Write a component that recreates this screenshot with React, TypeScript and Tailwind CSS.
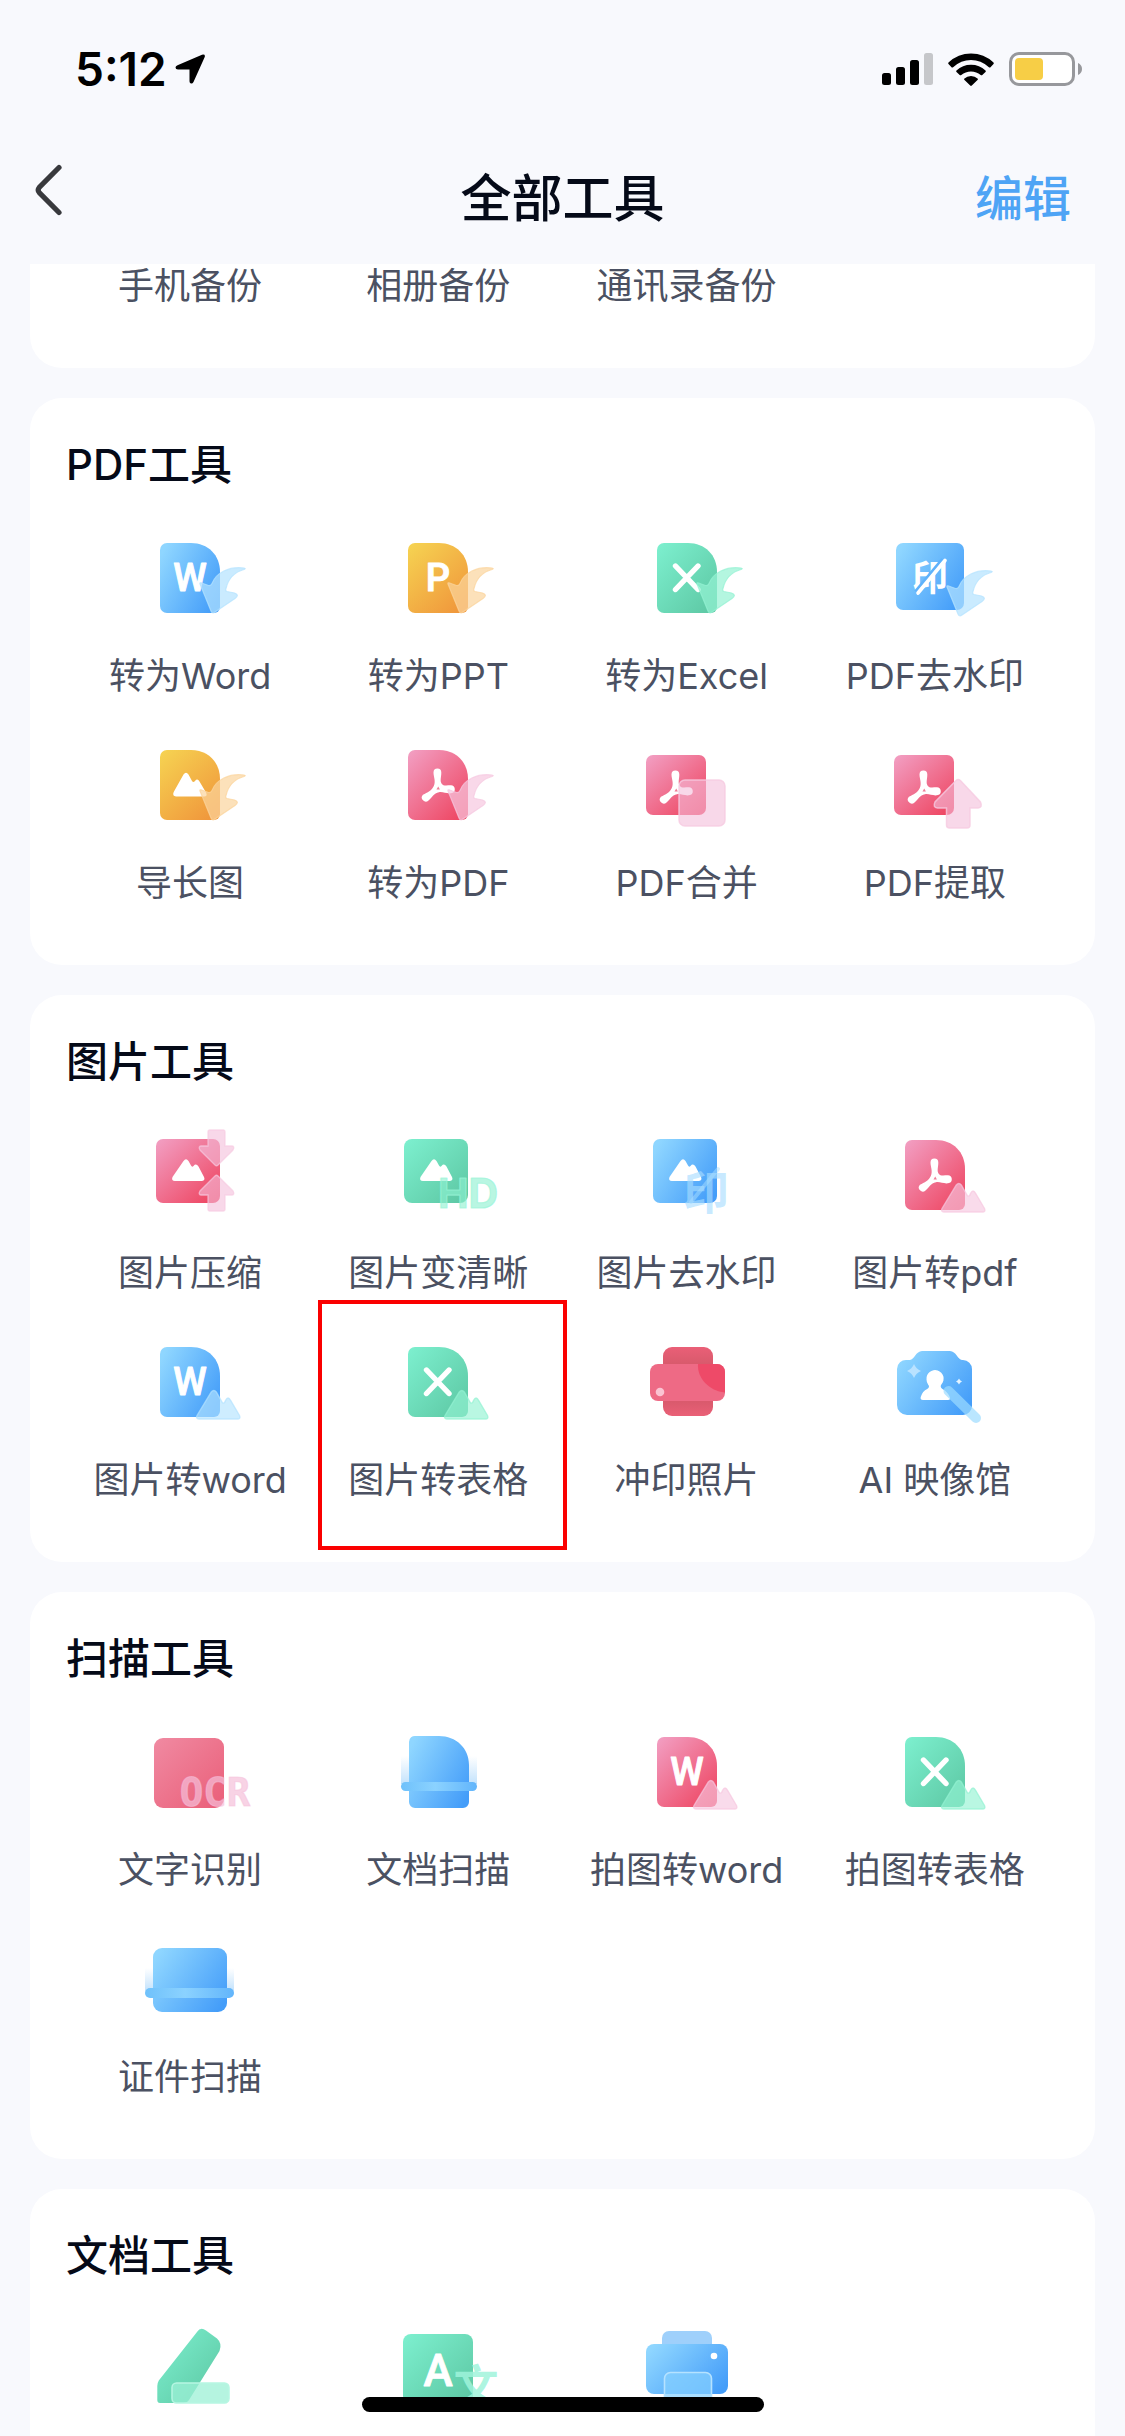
import type { ReactNode } from "react";

type Tone = "blue" | "amber" | "green" | "pink";

const CJK = '"Noto Sans CJK SC", sans-serif';

const OVERLAY: Record<Tone, string> = {
  blue: "#b4e3ff",
  amber: "#fbd49c",
  green: "#94f2d3",
  pink: "#f6c8e0",
};

const DOC_PATH =
  "M37 23H61C78 23 90 35 90 52V87a6 6 0 0 1-6 6H37a7 7 0 0 1-7-7V30a7 7 0 0 1 7-7Z";

/* Gradients shared by all the tool icons. */
function Gradients() {
  return (
    <svg className="absolute h-0 w-0" aria-hidden="true">
      <defs>
        <linearGradient id="blue" x1="0" y1="0.2" x2="1" y2="0.8">
          <stop offset="0" stopColor="#8fd6ff" />
          <stop offset="1" stopColor="#449df9" />
        </linearGradient>
        <linearGradient id="amber" x1="0" y1="0" x2="0.8" y2="1">
          <stop offset="0" stopColor="#f6d452" />
          <stop offset="1" stopColor="#f0983c" />
        </linearGradient>
        <linearGradient id="green" x1="0" y1="0" x2="1" y2="1">
          <stop offset="0" stopColor="#7df0cf" />
          <stop offset="1" stopColor="#5cc6a2" />
        </linearGradient>
        <linearGradient id="pink" x1="0" y1="0" x2="0.9" y2="1">
          <stop offset="0" stopColor="#f2a0c4" />
          <stop offset="1" stopColor="#ee4561" />
        </linearGradient>
        <linearGradient id="rose" x1="0" y1="0" x2="1" y2="1">
          <stop offset="0" stopColor="#f08aa2" />
          <stop offset="1" stopColor="#ea5e78" />
        </linearGradient>
        <linearGradient id="tray" x1="0" y1="0" x2="0" y2="1">
          <stop offset="0" stopColor="#ea5f77" />
          <stop offset="0.25" stopColor="#d85a6c" />
          <stop offset="0.8" stopColor="#da5a6d" />
          <stop offset="1" stopColor="#ea6077" />
        </linearGradient>
        <linearGradient id="beam" x1="0" y1="0" x2="0" y2="1">
          <stop offset="0" stopColor="#a9d6fb" stopOpacity="0" />
          <stop offset="1" stopColor="#a9d6fb" stopOpacity="0.7" />
        </linearGradient>
        <linearGradient id="bar" x1="0" y1="0" x2="1" y2="0">
          <stop offset="0" stopColor="#6fc1fb" />
          <stop offset="0.45" stopColor="#8bd2ff" />
          <stop offset="1" stopColor="#62b5fb" />
        </linearGradient>
      </defs>
    </svg>
  );
}

const FILL: Record<Tone, string> = {
  blue: "url(#blue)",
  amber: "url(#amber)",
  green: "url(#green)",
  pink: "url(#pink)",
};

function Icon({ children }: { children: ReactNode }) {
  return (
    <svg viewBox="0 0 120 120" className="h-[120px] w-[120px] overflow-visible" aria-hidden="true">
      {children}
    </svg>
  );
}

function Doc({ tone }: { tone: Tone }) {
  return <path d={DOC_PATH} fill={FILL[tone]} />;
}

function Letter({ char }: { char: string }) {
  return (
    <text x="60" y="71" fontSize="38" fontFamily="Roboto, sans-serif" fontWeight="500" textAnchor="middle" fill="#fff" stroke="#fff" strokeWidth="1" strokeLinejoin="round">
      {char}
    </text>
  );
}

function Cross() {
  return <path d="M48.5 46 71 69.5M71 46 48.5 69.5" stroke="#fff" strokeWidth="5.4" strokeLinecap="round" />;
}

/* Curved arrow fin laid over the lower right corner. */
function Fin({ tone }: { tone: Tone }) {
  return (
    <path
      d="M114 48C99 46 86 53 82 63.500Q81 66 78.500 65.500L71 62.800Q69.500 62.500 70 64L81 91Q82.200 94 85 92L105 78.500Q110 75 104.500 73L97 71.500Q95 71 96 68.500C98 60 103 52.500 114 49.500Q116.500 48.300 114 48Z"
      fill={OVERLAY[tone]}
      fillOpacity="0.7"
      stroke={OVERLAY[tone]}
      strokeOpacity="0.75"
      strokeWidth="1.2"
    />
  );
}

/* Two-peak hill range: solid white motif. */
function WhiteHills({ wide }: { wide?: boolean }) {
  return wide ? (
    <path d="M46 69.500h28q4 0 2-4l-6.500-11q-2-3.500-4.500-.5-1.700 2-3 0l-3.500-6.500q-2.500-3.500-5 0L43.700 65q-1.700 4 2.300 4.500Z" fill="#fff" />
  ) : (
    <path d="M45 64h27q3.500-.5 2-4l-5.500-10.500q-2.500-3.500-5-.5-1.500 1.500-2.500-.5l-2.500-4.500q-2.500-3.500-5 0L42.500 60q-1.500 4 2.500 4Z" fill="#fff" />
  );
}

function OverlayHills({ tone }: { tone: Tone }) {
  return (
    <path
      d="M69 95q-3.500-.3-2-3.500L81.300 68q2.500-3 5 0l6 10.500q2 2 3.300-2.200 2.400-4.600 5 0l8.900 15.200q1.300 3.200-1.500 3.500Z"
      fill={OVERLAY[tone]}
      fillOpacity="0.65"
      stroke={OVERLAY[tone]}
      strokeOpacity="0.7"
      strokeWidth="1.4"
    />
  );
}

/* Three-lobed PDF mark. */
function PdfMark() {
  return (
    <g>
      <path
        d="M55.500 45.500a3.900 3.900 0 0 1 7.800 0C63.300 50 61.800 53.500 63.500 56.500 65.500 59.500 69 58.300 73 58.300a4 4 0 0 1 1 7.800C69 67.300 65.500 64.500 61 65.200 55.500 66 54.500 70.500 50.500 73.500a4 4 0 0 1-5.600-5.700C49.500 65.500 53.800 63.500 55.800 59 58 54 55.500 50 55.500 45.500Z"
        fill="#fff"
      />
      <path d="m60.200 59.600 1.700 2.900h-3.400Z" fill="#ee7d96" />
    </g>
  );
}

function ScanSides({ left, right, top }: { left: number; right: number; top: number }) {
  return (
    <>
      <rect x={left} y={top} width="8" height={70 - top} fill="url(#beam)" />
      <rect x={right} y={top} width="8" height={70 - top} fill="url(#beam)" />
    </>
  );
}

const DocFin = ({ tone, children }: { tone: Tone; children: ReactNode }) => (
  <Icon>
    <Doc tone={tone} />
    {children}
    <Fin tone={tone} />
  </Icon>
);

const DocHills = ({ tone, children }: { tone: Tone; children: ReactNode }) => (
  <Icon>
    <Doc tone={tone} />
    {children}
    <OverlayHills tone={tone} />
  </Icon>
);

const RemoveMarkIcon = () => (
  <Icon>
    <rect x="21" y="23" width="68" height="67" rx="7" fill={FILL.blue} />
    <text x="55" y="71" fontSize="36" fontFamily={CJK} fontWeight="700" textAnchor="middle" fill="#fff">印</text>
    <path d="M40.500 71.500 67.500 39" stroke="#5fb2fb" strokeWidth="3" />
    <path d="M43 73 70 40.500" stroke="#fff" strokeWidth="3.600" strokeLinecap="round" />
    <g transform="translate(2 3)">
      <Fin tone="blue" />
    </g>
  </Icon>
);

const MergeIcon = () => (
  <Icon>
    <rect x="19" y="28" width="60" height="60" rx="7" fill={FILL.pink} />
    <g transform="translate(-11 2)">
      <PdfMark />
    </g>
    <rect x="52" y="53" width="46" height="46" rx="6" fill="#f4bedb" fillOpacity="0.6" stroke="#f6cbe1" strokeOpacity="0.8" strokeWidth="1.5" />
  </Icon>
);

const ExtractIcon = () => (
  <Icon>
    <rect x="19" y="28" width="60" height="60" rx="7" fill={FILL.pink} />
    <g transform="translate(-11 2)">
      <PdfMark />
    </g>
    <path
      d="M81 53.500q2.200-1.800 4.400 0L105.500 75q2.500 5.500-2.500 6h-8v17q0 3-3 3H74.500q-3 0-3-3V81h-9q-5-.5-2.500-6Z"
      fill="#f4bedb"
      fillOpacity="0.6"
      stroke="#f6cbe1"
      strokeOpacity="0.8"
      strokeWidth="1.5"
    />
  </Icon>
);

const CompressIcon = () => (
  <Icon>
    <rect x="26" y="22" width="64" height="64" rx="7" fill={FILL.pink} />
    <WhiteHills />
    <g fill="#f4bedb" fillOpacity="0.6" stroke="#f6cbe1" strokeOpacity="0.7" strokeWidth="1.300">
      <path d="M80 13h13q2 0 2 2v14h7q3 .5 1 4L88 48q-1.500 1.500-3 0L70 33q-2-3.500 1-4h7V15q0-2 2-2Z" />
      <path d="M80 94h13q2 0 2-2V78h7q3-.5 1-4L88 59q-1.500-1.500-3 0L70 74q-2 3.500 1 4h7v14q0 2 2 2Z" />
    </g>
  </Icon>
);

const HdIcon = () => (
  <Icon>
    <rect x="26" y="22" width="64" height="64" rx="8" fill={FILL.green} />
    <WhiteHills />
    <text x="90" y="91" fontSize="41" fontFamily="Inter, sans-serif" fontWeight="700" textAnchor="middle" fill="#8ff2d1" fillOpacity="0.65" stroke="#9bf5d8" strokeOpacity="0.7" strokeWidth="1.200" strokeLinejoin="round">
      HD
    </text>
  </Icon>
);

const ImageMarkIcon = () => (
  <Icon>
    <rect x="26" y="22" width="64" height="64" rx="7" fill={FILL.blue} />
    <WhiteHills />
    <text x="79" y="92" fontSize="46" fontFamily={CJK} fontWeight="700" textAnchor="middle" fill="#a8ddff" fillOpacity="0.65">印</text>
    <path d="M64 85 91 52" stroke="#a8ddff" strokeOpacity="0.5" strokeWidth="4" strokeLinecap="round" />
  </Icon>
);

const PhotoPrintIcon = () => (
  <Icon>
    <rect x="36" y="23" width="50" height="69" rx="9" fill="url(#tray)" />
    <rect x="23" y="40" width="75" height="37" rx="8" fill="#ee6a85" />
    <path d="M71 40h19a8 8 0 0 1 8 8v20.500C82 67 70 54 71 40Z" fill="#ee4a68" />
    <circle cx="33" cy="68" r="4.300" fill="#fbc3d2" />
  </Icon>
);

const CameraIcon = () => (
  <Icon>
    <path
      d="M32 36h3c4 0 6-9 12-9h28c6 0 8 9 12 9h1a9 9 0 0 1 9 9v37a9 9 0 0 1-9 9H32a10 10 0 0 1-10-10V45a9 9 0 0 1 10-9Z"
      fill={FILL.blue}
    />
    <path d="M39 40q2 5 7 7-5 2-7 7-2-5-7-7 5-2 7-7Z" fill="#b9e2ff" />
    <path d="M84 54.500q.8 2.200 3 3-2.200.8-3 3-.8-2.200-3-3 2.200-.8 3-3Z" fill="#e4f4ff" />
    <path d="M51.500 55.500a8.600 8.600 0 1 1 15 4.800q-2 2.700 1 4.700 5 2.500 7.500 8.500.5 2.500-2 2.500h-25q-3 0-2.300-3 1.800-5.800 6.500-8 3-2 1-4.200-1.700-2.300-1.700-5.300Z" fill="#fff" />
    <path d="M73.500 67 101 94" stroke="#9ddcff" strokeOpacity="0.7" strokeWidth="10" strokeLinecap="round" />
  </Icon>
);

const OcrIcon = () => (
  <Icon>
    <rect x="24" y="24" width="70" height="70" rx="9" fill="url(#rose)" />
    <text x="85" y="92" fontSize="39" fontFamily='"DejaVu Sans Mono", monospace' fontWeight="700" textAnchor="middle" fill="#f6bfda" fillOpacity="0.7" stroke="#f6bfda" strokeOpacity="0.5" strokeWidth="1.200" strokeLinejoin="round">
      OCR
    </text>
  </Icon>
);

const DocScanIcon = () => (
  <Icon>
    <ScanSides left={23} right={91} top={42} />
    <path d="M38 22H61C78 22 91 34 91 51V88a6 6 0 0 1-6 6H37a6 6 0 0 1-6-6V28a6 6 0 0 1 7-6Z" fill={FILL.blue} />
    <rect x="23" y="68" width="76" height="9" rx="4.500" fill="url(#bar)" />
  </Icon>
);

const IdScanIcon = () => (
  <Icon>
    <ScanSides left={15} right={96} top={47} />
    <rect x="23" y="27" width="74" height="64" rx="9" fill={FILL.blue} />
    <rect x="15" y="67" width="89" height="10" rx="5" fill="url(#bar)" />
  </Icon>
);

const PenIcon = () => (
  <Icon>
    <path d="M67 21q3.500-5.500 9-1.500L87 27.500q5.500 5 2.500 12.500L59 89q-2 3-5.500 3H30q-2.700 0-2.700-3V75q0-3 1.500-5.500Z" fill={FILL.green} />
    <rect x="42" y="72" width="57" height="20" rx="4.500" fill="#9cf0d6" fillOpacity="0.75" stroke="#b6f6e2" strokeWidth="1.500" />
  </Icon>
);

const TranslateIcon = () => (
  <Icon>
    <rect x="25" y="23" width="70" height="70" rx="8" fill={FILL.green} />
    <text x="60" y="75" fontSize="44" fontFamily="Roboto, sans-serif" fontWeight="500" textAnchor="middle" fill="#fff" stroke="#fff" strokeWidth="0.8" strokeLinejoin="round">A</text>
    <text x="98" y="92" fontSize="45" fontFamily={CJK} fontWeight="700" textAnchor="middle" fill="#9ff4db" fillOpacity="0.85">文</text>
  </Icon>
);

const PrinterIcon = () => (
  <Icon>
    <rect x="35" y="20" width="50" height="30" rx="7" fill="#9fd0fb" />
    <rect x="19" y="33" width="82" height="50" rx="8" fill={FILL.blue} />
    <rect x="37.500" y="61.500" width="47" height="34" rx="6" fill="#86d0ff" fillOpacity="0.7" stroke="#b5e2ff" strokeWidth="1.600" />
    <circle cx="87" cy="45" r="3.300" fill="#fff" />
  </Icon>
);

interface Tool {
  name: string;
  icon?: ReactNode;
  highlighted?: boolean;
}

interface Group {
  title: string;
  tools: Tool[];
}

const BACKUP: Tool[] = [{ name: "手机备份" }, { name: "相册备份" }, { name: "通讯录备份" }];

const GROUPS: Group[] = [
  {
    title: "PDF工具",
    tools: [
      { name: "转为Word", icon: <DocFin tone="blue"><Letter char="W" /></DocFin> },
      { name: "转为PPT", icon: <DocFin tone="amber"><Letter char="P" /></DocFin> },
      { name: "转为Excel", icon: <DocFin tone="green"><Cross /></DocFin> },
      { name: "PDF去水印", icon: <RemoveMarkIcon /> },
      { name: "导长图", icon: <DocFin tone="amber"><WhiteHills wide /></DocFin> },
      { name: "转为PDF", icon: <DocFin tone="pink"><PdfMark /></DocFin> },
      { name: "PDF合并", icon: <MergeIcon /> },
      { name: "PDF提取", icon: <ExtractIcon /> },
    ],
  },
  {
    title: "图片工具",
    tools: [
      { name: "图片压缩", icon: <CompressIcon /> },
      { name: "图片变清晰", icon: <HdIcon /> },
      { name: "图片去水印", icon: <ImageMarkIcon /> },
      { name: "图片转pdf", icon: <DocHills tone="pink"><PdfMark /></DocHills> },
      { name: "图片转word", icon: <DocHills tone="blue"><Letter char="W" /></DocHills> },
      { name: "图片转表格", icon: <DocHills tone="green"><Cross /></DocHills>, highlighted: true },
      { name: "冲印照片", icon: <PhotoPrintIcon /> },
      { name: "AI 映像馆", icon: <CameraIcon /> },
    ],
  },
  {
    title: "扫描工具",
    tools: [
      { name: "文字识别", icon: <OcrIcon /> },
      { name: "文档扫描", icon: <DocScanIcon /> },
      { name: "拍图转word", icon: <DocHills tone="pink"><Letter char="W" /></DocHills> },
      { name: "拍图转表格", icon: <DocHills tone="green"><Cross /></DocHills> },
      { name: "证件扫描", icon: <IdScanIcon /> },
    ],
  },
];

const DOC_TOOLS = [
  { label: "电子签名", icon: <PenIcon /> },
  { label: "翻译", icon: <TranslateIcon /> },
  { label: "打印", icon: <PrinterIcon /> },
];

function ToolButton({ tool }: { tool: Tool }) {
  return (
    <button type="button" className="relative flex flex-col items-center gap-[11px]">
      {tool.icon}
      <span className="text-[36px] leading-[50px] whitespace-nowrap text-[#4b5162]">{tool.name}</span>
      {tool.highlighted && <span className="absolute -top-6 -right-1 -bottom-[45px] left-1 border-4 border-[#fa0000]" />}
    </button>
  );
}

function CardTitle({ children }: { children: ReactNode }) {
  return <h2 className="text-[42px] leading-[58px] font-medium text-[#050a18]">{children}</h2>;
}

function StatusBar() {
  return (
    <div className="flex h-[132px] shrink-0 items-center justify-between pt-[6px] pr-[43px] pl-[75px]">
      <div className="flex items-center gap-2">
        <span className="text-[46px] leading-none font-semibold text-black">5:12</span>
        <svg viewBox="0 0 30 30" className="h-[30px] w-[30px]" aria-hidden="true">
          <path d="M27 .700Q31 0 29.500 3.500L18.500 28q-1.300 2.300-3 1.300-1-.7-1-2V15.500H3Q.5 15.500.5 13.500q0-1.300 2-2.200Z" fill="#000" />
        </svg>
      </div>
      <div className="flex items-center gap-[15px]">
        <svg viewBox="0 0 51 32" className="h-8 w-[51px]" aria-hidden="true">
          <rect x="0" y="20" width="9" height="12" rx="2.500" />
          <rect x="14" y="14" width="9" height="18" rx="2.500" />
          <rect x="28" y="7" width="9" height="25" rx="2.500" />
          <rect x="42" y="0" width="9" height="32" rx="2.500" fill="#c6c7ca" />
        </svg>
        <svg viewBox="0 0 46 33" className="h-[33px] w-[46px]" aria-hidden="true">
          <path d="M0.500 9.500Q10 .5 23 .5t22.500 9q.7.800 0 1.500l-3 3.200q-.8.700-1.600 0Q33 7 23 7T5.100 14.200q-.8.700-1.600 0L.5 11q-.7-.7 0-1.500Z" />
          <path d="M8.500 17.500Q14.500 11.700 23 11.700t14.500 5.800q.8.800 0 1.600L34.300 22q-.8.700-1.600 0-4.200-3.500-9.700-3.500T13.300 22q-.8.700-1.600 0L8.500 19.100q-.8-.8 0-1.600Z" />
          <path d="M16.500 25.500Q19 23 23 23t6.500 2.500q.8.700 0 1.600l-5.700 5.500q-.8.700-1.600 0l-5.700-5.500q-.8-.9 0-1.600Z" />
        </svg>
        <svg viewBox="0 0 73 34" className="h-[34px] w-[73px]" aria-hidden="true">
          <rect x="1.500" y="1.500" width="63" height="31" rx="8.500" fill="#fff" stroke="#97989c" strokeWidth="3" />
          <rect x="6" y="6" width="28" height="22" rx="4" fill="#f7ce46" />
          <path d="M69 11q4 1.800 4 6t-4 6Z" fill="#97989c" />
        </svg>
      </div>
    </div>
  );
}

export default function App() {
  return (
    <div className="relative flex h-screen flex-col overflow-hidden bg-[#f8f9fd] font-['Inter','Noto_Sans_CJK_SC',sans-serif]">
      <Gradients />
      <StatusBar />
      <header className="grid h-[132px] shrink-0 grid-cols-[1fr_auto_1fr] items-center px-[34px] pt-[2px]">
        <button type="button" aria-label="返回" className="justify-self-start pb-[18px]">
          <svg viewBox="0 0 28 52" className="h-[52px] w-[28px]" aria-hidden="true">
            <path d="M25 3.500 5.200 23.500q-2 2.500 0 5L25 48.500" fill="none" stroke="#38393d" strokeWidth="5.200" strokeLinecap="round" />
          </svg>
        </button>
        <h1 className="px-6 text-[51px] font-medium text-[#050a18]">全部工具</h1>
        <button type="button" className="justify-self-end pr-5 text-[48px] font-medium text-[#4ea4f5]">编辑</button>
      </header>

      <main className="flex flex-1 flex-col gap-[30px] overflow-hidden px-[30px]">
        <section className="shrink-0 rounded-b-[32px] bg-white px-9 pb-[57px]">
          <div className="-mt-[3px] grid grid-cols-4">
            {BACKUP.map((tool) => (
              <ToolButton key={tool.name} tool={tool} />
            ))}
          </div>
        </section>

        {GROUPS.map((group) => (
          <section key={group.title} className="shrink-0 rounded-[32px] bg-white px-9 pt-[38px] pb-[57px]">
            <CardTitle>{group.title}</CardTitle>
            <div className="mt-[26px] grid grid-cols-4 gap-y-[26px]">
              {group.tools.map((tool) => (
                <ToolButton key={tool.name} tool={tool} />
              ))}
            </div>
          </section>
        ))}

        <section className="shrink-0 rounded-t-[32px] bg-white px-9 pt-[38px] pb-10">
          <CardTitle>文档工具</CardTitle>
          <div className="mt-[26px] grid grid-cols-4">
            {DOC_TOOLS.map((tool) => (
              <button key={tool.label} type="button" aria-label={tool.label} className="flex flex-col items-center">
                {tool.icon}
              </button>
            ))}
          </div>
        </section>
      </main>

      <div className="absolute bottom-6 left-1/2 h-[15px] w-[402px] -translate-x-1/2 rounded-full bg-black" />
    </div>
  );
}
